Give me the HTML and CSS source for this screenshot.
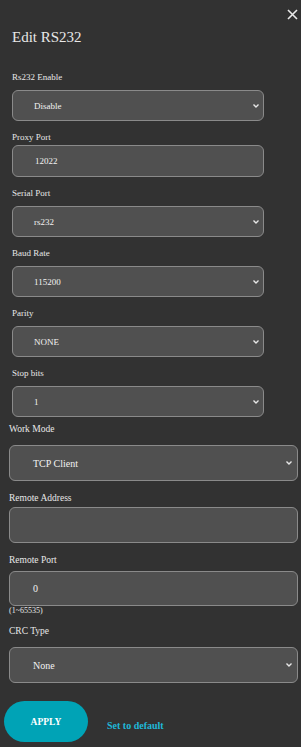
FILE: index.html
```html
<!DOCTYPE html>
<html lang="en">

<head>
    <meta charset="UTF-8">
    <meta name="viewport" content="width=device-width, initial-scale=1.0">
    <title>Edit RS232</title>
    <link rel="stylesheet" href="styles.css">
</head>

<body>

    <div class="panel">
        <div class="topbar">
            <button class="close" aria-label="Close">
                <svg width="11" height="11" viewBox="0 0 11 11">
                    <path d="M1 1 L10 10 M10 1 L1 10" stroke="#e8e8e8" stroke-width="1.6" fill="none" />
                </svg>
            </button>
        </div>

        <h1 class="title">Edit RS232</h1>

        <div class="group serial">
            <label class="label">Rs232 Enable</label>
            <div class="control select">
                <span>Disable</span>
                <svg class="chev" width="6" height="4" viewBox="0 0 6 4"><path d="M0.5 0.5 L3 3 L5.5 0.5" /></svg>
            </div>

            <label class="label">Proxy Port</label>
            <div class="control input">
                <span>12022</span>
            </div>

            <label class="label">Serial Port</label>
            <div class="control select">
                <span>rs232</span>
                <svg class="chev" width="6" height="4" viewBox="0 0 6 4"><path d="M0.5 0.5 L3 3 L5.5 0.5" /></svg>
            </div>

            <label class="label">Baud Rate</label>
            <div class="control select">
                <span>115200</span>
                <svg class="chev" width="6" height="4" viewBox="0 0 6 4"><path d="M0.5 0.5 L3 3 L5.5 0.5" /></svg>
            </div>

            <label class="label">Parity</label>
            <div class="control select">
                <span>NONE</span>
                <svg class="chev" width="6" height="4" viewBox="0 0 6 4"><path d="M0.5 0.5 L3 3 L5.5 0.5" /></svg>
            </div>

            <label class="label">Stop bits</label>
            <div class="control select">
                <span>1</span>
                <svg class="chev" width="6" height="4" viewBox="0 0 6 4"><path d="M0.5 0.5 L3 3 L5.5 0.5" /></svg>
            </div>
        </div>

        <div class="group work">
            <label class="label">Work Mode</label>
            <div class="control select">
                <span>TCP Client</span>
                <svg class="chev" width="6" height="4" viewBox="0 0 6 4"><path d="M0.5 0.5 L3 3 L5.5 0.5" /></svg>
            </div>

            <label class="label">Remote Address</label>
            <div class="control input addr">
                <span></span>
            </div>

            <label class="label">Remote Port</label>
            <div class="control input port">
                <span>0</span>
            </div>
            <div class="hint">(1~65535)</div>

            <label class="label">CRC Type</label>
            <div class="control select">
                <span>None</span>
                <svg class="chev" width="6" height="4" viewBox="0 0 6 4"><path d="M0.5 0.5 L3 3 L5.5 0.5" /></svg>
            </div>
        </div>

        <div class="actions">
            <button class="apply">APPLY</button>
            <a class="reset" href="#">Set to default</a>
        </div>
    </div>

</body>

</html>
```

FILE: styles.css
```css
body {
    font-family: 'Liberation Serif', 'Times New Roman', serif;
    background-color: #323232;
    color: #e8e8e8;
    margin: 0;
    padding: 0;
}

.panel {
    width: 301px;
    height: 747px;
    overflow: hidden;
}

.topbar {
    display: flex;
    justify-content: flex-end;
    height: 28px;
    padding-right: 3px;
    box-sizing: border-box;
}

.close {
    background: none;
    border: none;
    padding: 0;
    margin-top: 9px;
    width: 11px;
    height: 11px;
    display: flex;
}

.title {
    font-size: 15px;
    font-weight: normal;
    line-height: 18px;
    margin: 0 0 0 12px;
}

.group {
    display: flex;
    flex-direction: column;
}

.serial {
    margin-left: 12px;
    width: 252px;
    margin-top: 15px;
}

.work {
    margin-left: 9px;
    width: 289px;
}

.label {
    display: block;
    font-size: 9px;
    line-height: 12px;
    margin-top: 9.5px;
}

.work .label {
    font-size: 9.5px;
    margin-top: 11px;
}

.work .label:first-child {
    margin-top: 6px;
}

.control {
    display: flex;
    align-items: center;
    justify-content: space-between;
    background-color: #505050;
    border: 1px solid #8a8a8a;
    border-radius: 6px;
    box-sizing: border-box;
    font-size: 9px;
    color: #f2f2f2;
    padding: 0 4px 0 21px;
}

.select {
    height: 31px;
    margin-top: 7.5px;
}

.input {
    height: 32px;
    margin-top: 2.5px;
    padding-left: 22px;
}

.work .control {
    font-size: 10px;
    padding-left: 23px;
    padding-right: 5px;
}

.work .select {
    height: 36px;
    margin-top: 10px;
}

.work .input {
    height: 36px;
    margin-top: 3px;
}

.work .port {
    height: 35px;
    margin-top: 4.5px;
}

.chev {
    fill: none;
    stroke: #e8e8e8;
    stroke-width: 1.4;
}

.hint {
    font-size: 8px;
    line-height: 10px;
}

.work .hint + .label {
    margin-top: 9.5px;
}

.actions {
    display: flex;
    align-items: center;
    margin: 18px 0 0 4px;
}

.apply {
    width: 84px;
    height: 41px;
    border: none;
    border-radius: 21px;
    background-color: #00a3b6;
    color: #ffffff;
    font-family: 'Liberation Serif', 'Times New Roman', serif;
    font-weight: bold;
    font-size: 9.5px;
    padding: 0;
}

.reset {
    margin-left: 19px;
    margin-top: 8px;
    font-size: 10px;
    font-weight: bold;
    color: #1fb8d8;
    text-decoration: none;
}
```
